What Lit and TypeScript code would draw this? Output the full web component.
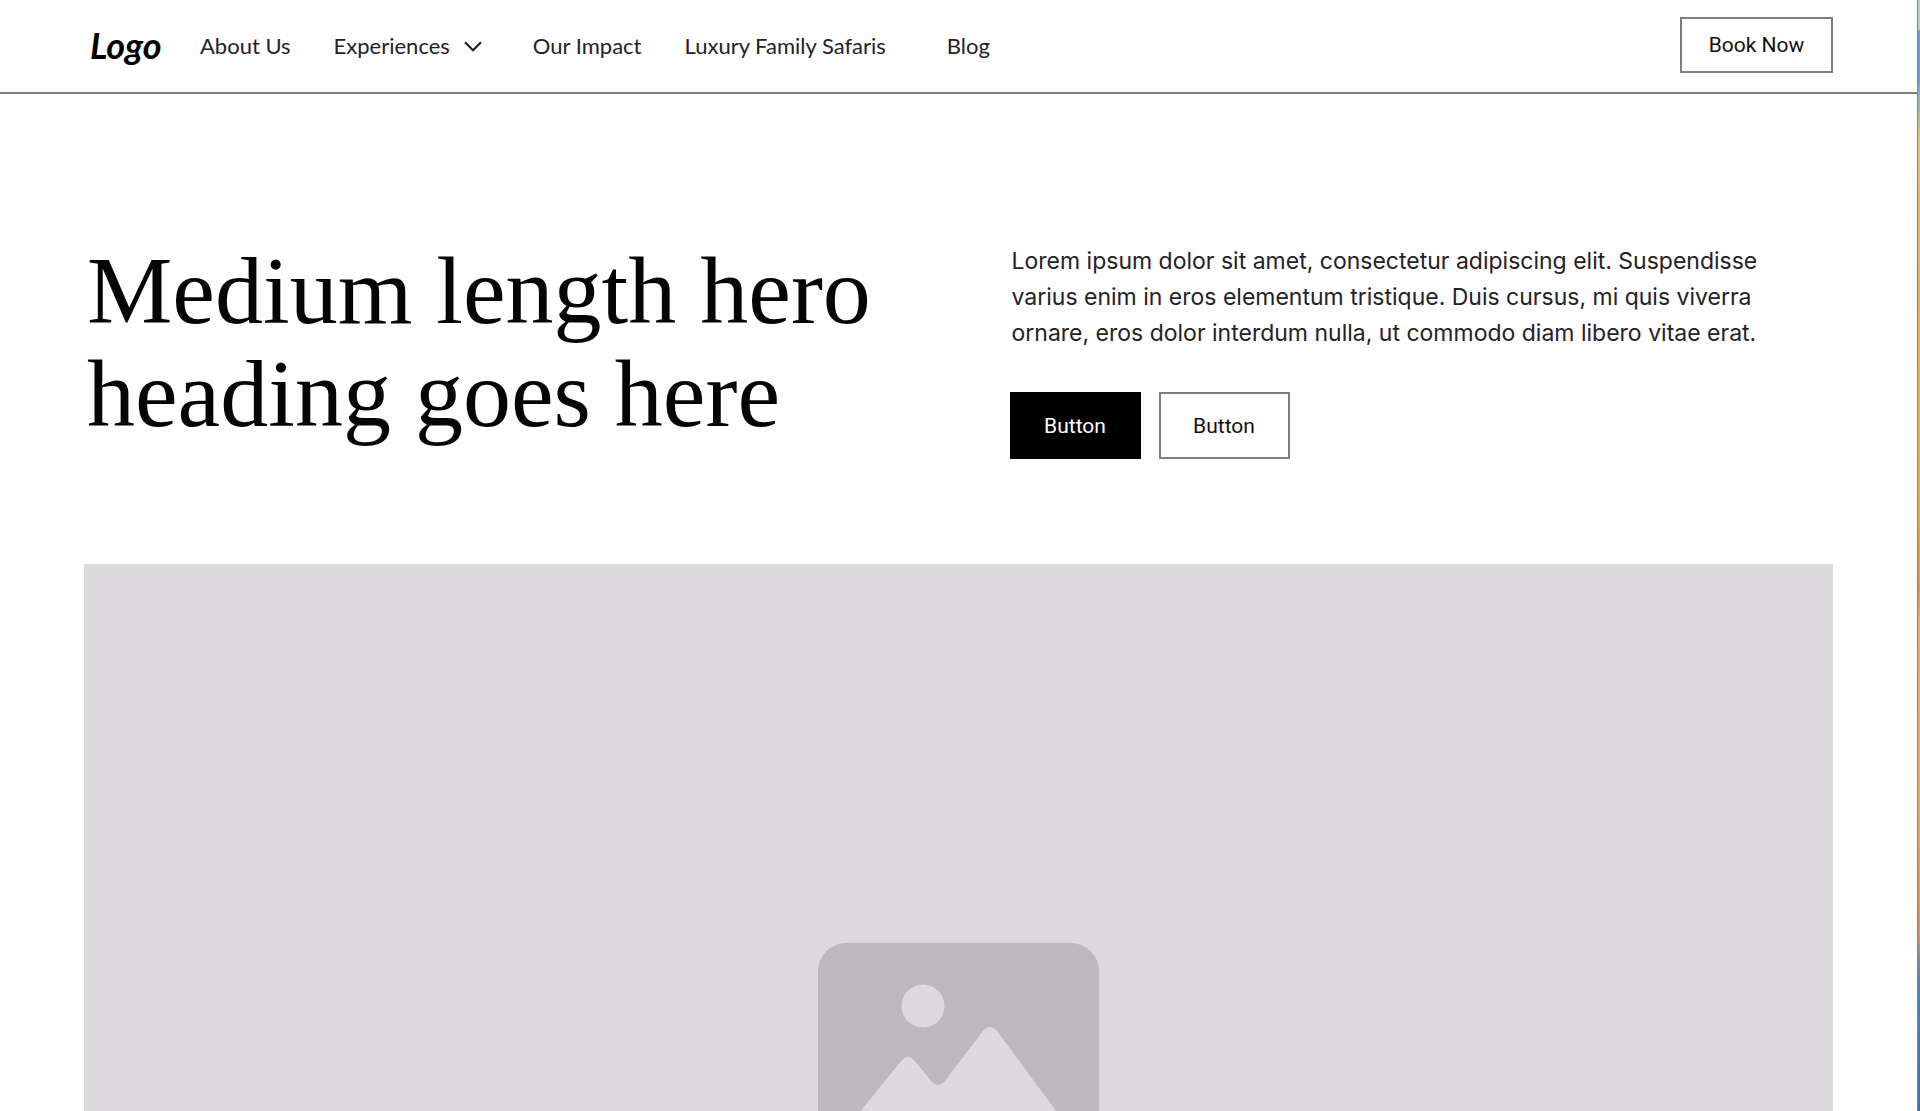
import { LitElement, html, css, svg } from "lit";
import { customElement } from "lit/decorators.js";

const line = css`#7f7d82`;

@customElement("site-header")
class SiteHeader extends LitElement {
  static styles = css`
    :host {
      display: block;
      border-bottom: 2px solid ${line};
    }
    .bar {
      display: flex;
      align-items: center;
      height: 92px;
      padding: 0 84px 0 90px;
      box-sizing: border-box;
    }
    .logo {
      width: 110px;
      margin-bottom: 2px;
      font: italic 700 36px/40px Lato, cursive;
      color: #000;
      text-decoration: none;
    }
    nav {
      display: flex;
      flex: 1;
      align-items: center;
      gap: 43px;
    }
    .link {
      display: inline-flex;
      align-items: center;
      gap: 14px;
      padding: 0;
      border: 0;
      background: none;
      font: 400 22px/32px Lato, sans-serif;
      color: #242226;
      text-decoration: none;
      white-space: nowrap;
    }
    .menu {
      margin-right: 8px;
    }
    .last {
      margin-left: 18px;
    }
    .chevron {
      width: 18px;
      height: 11px;
      fill: none;
      stroke: #242226;
      stroke-width: 2.2;
    }
    .book {
      width: 153px;
      height: 56px;
      margin-bottom: 2px;
      padding: 0;
      border: 2px solid ${line};
      background: #fff;
      font: 400 21px/28px Roboto, sans-serif;
      color: #111;
    }
  `;
  render() {
    return html`<header class="bar">
      <a class="logo" href="#home">Logo</a>
      <nav aria-label="Main">
        <a class="link" href="#about">About Us</a>
        <button class="link menu" type="button" aria-haspopup="true">
          Experiences
          <svg class="chevron" viewBox="0 0 18 11" aria-hidden="true"><path d="M1 1.2 9 9.2 17 1.2" /></svg>
        </button>
        <a class="link" href="#impact">Our Impact</a>
        <a class="link" href="#safaris">Luxury Family Safaris</a>
        <a class="link last" href="#blog">Blog</a>
      </nav>
      <button class="book" type="button">Book Now</button>
    </header>`;
  }
}

@customElement("hero-section")
class HeroSection extends LitElement {
  static styles = css`
    :host {
      display: block;
      padding: 142px 84px 0;
    }
    .intro {
      display: grid;
      grid-template-columns: 1fr 1fr;
      column-gap: 102px;
      align-items: start;
      margin-bottom: 105px;
    }
    h1 {
      margin: 0;
      padding: 3px 0 0 3px;
      font: 400 96px/103px "Liberation Serif", serif;
      color: #050505;
    }
    .copy {
      padding-top: 7px;
    }
    p {
      max-width: 780px;
      margin: 0 0 41px;
      padding-left: 2px;
      font: 400 23px/36px Inter, sans-serif;
      color: #242226;
    }
    .actions {
      display: flex;
      gap: 18px;
    }
    .button {
      width: 131px;
      height: 67px;
      padding: 0;
      border: 2px solid ${line};
      background: #fff;
      font: 400 21px/28px Roboto, sans-serif;
      color: #111;
    }
    .primary {
      border-color: #000;
      background: #000;
      color: #fff;
    }
    .picture {
      display: flex;
      align-items: center;
      justify-content: center;
      aspect-ratio: 16 / 9;
      background: #dcdadd;
    }
    .icon {
      width: 281px;
      height: 226px;
    }
  `;
  render() {
    return html`<section>
      <div class="intro">
        <h1>Medium length hero heading goes here</h1>
        <div class="copy">
          <p>
            Lorem ipsum dolor sit amet, consectetur adipiscing elit. Suspendisse varius enim in eros elementum
            tristique. Duis cursus, mi quis viverra ornare, eros dolor interdum nulla, ut commodo diam libero vitae
            erat.
          </p>
          <div class="actions">
            <button class="button primary" type="button">Button</button>
            <button class="button" type="button">Button</button>
          </div>
        </div>
      </div>
      <div class="picture" role="img" aria-label="Placeholder image">
        <svg class="icon" viewBox="0 0 281 226">
          ${svg`<rect width="281" height="226" rx="28" fill="#bbb9bc" />
          <circle cx="105" cy="63" r="21.5" fill="#dcdadd" />
          <path d="M28 186 L84 117 Q90 110 96 117 L114 139 Q120 145 126 139 L165 88 Q172 80 179 88 L253 188 Q258 198 248 198 H32 Q22 197 28 186Z" fill="#dcdadd" />`}
        </svg>
      </div>
    </section>`;
  }
}

@customElement("app-root")
class AppRoot extends LitElement {
  static styles = css`
    :host {
      display: flex;
      height: 100vh;
      background: #fefefe;
    }
    .page {
      flex: 1;
      min-width: 0;
      overflow-y: auto;
      scrollbar-width: none;
    }
    .edge {
      width: 2px;
      border-left: 1px solid #858388;
      background: linear-gradient(
        #b4d3c0 0 29px,
        #4fa5dc 31px 75px,
        #8fb0c8 95px,
        #dccb6a 140px,
        #efb545 230px,
        #f0ad3c 480px,
        #e7943c 590px,
        #efb04a 620px,
        #eead48 800px,
        #dd9450 930px,
        #6f89a8 965px,
        #3f84c4 990px,
        #386fb0 1111px
      );
    }
  `;
  render() {
    return html`<main class="page">
        <site-header></site-header>
        <hero-section></hero-section>
      </main>
      <div class="edge"></div>`;
  }
}
